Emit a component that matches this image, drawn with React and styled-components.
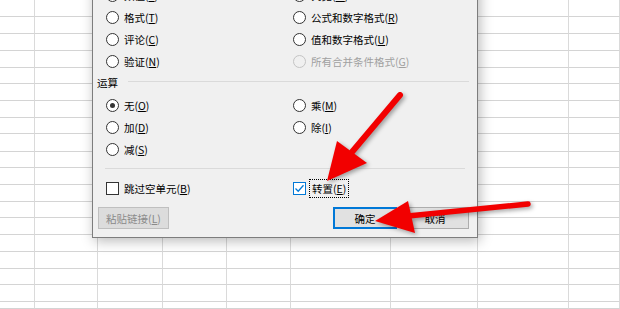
import styled, { createGlobalStyle } from 'styled-components';

// page reset + default font
const GlobalStyle = createGlobalStyle`
    html, body {
        margin: 0;
        padding: 0;
        width: 620px;
        height: 309px;
        overflow: hidden;
        background: #fff;
    }
    body {
        font-family: 'Microsoft YaHei UI', 'Noto Sans CJK SC', 'Noto Sans', sans-serif;
        font-size: 10.5px;
        color: #000;
    }
`;

// spreadsheet geometry (column / row sizes read from the sheet behind the dialog)
const colWidths = [35, 63, 65, 64, 64, 100, 87, 91];
const rowLines = [16, 33, 50, 67, 83, 100, 117, 133, 151, 167, 184, 201, 217, 234, 251, 268, 284, 301];
const rowHeights = rowLines.map((y, i) => (i === 0 ? y + 1 : y - rowLines[i - 1]));

const Page = styled.div`
    position: relative;
    width: 620px;
    height: 309px;
    overflow: hidden;
`;

const Sheet = styled.div`
    display: grid;
    grid-template-columns: ${colWidths.map((w) => w + 'px').join(' ')} 1fr;
    grid-template-rows: ${rowHeights.map((h) => h + 'px').join(' ')} 1fr;
    width: 620px;
    height: 309px;
`;

const Cell = styled.div`
    box-sizing: border-box;
    border-right: 1px solid #dadada;
    border-bottom: 1px solid #d4d4d4;
`;

// the paste special window, sitting over the sheet
const Dialog = styled.div`
    position: absolute;
    left: 92px;
    bottom: 71px;
    width: 386px;
    box-sizing: border-box;
    background: #f0f0f0;
    border: 1px solid #7d7d7d;
    box-shadow: 2px 3px 12px rgba(0, 0, 0, 0.28);
    padding: 10px 8px 8px 0;
    display: flex;
    flex-direction: column;
`;

const OptionGrid = styled.div`
    display: grid;
    grid-template-columns: 187px 1fr;
    grid-auto-rows: 22px;
    padding-left: 13px;
`;

const Option = styled.label`
    display: flex;
    align-items: center;
    gap: 5px;
    white-space: nowrap;
    color: ${(props) => (props.$disabled ? '#a0a0a0' : '#000')};
`;

const Radio = styled.span`
    width: 13px;
    height: 13px;
    box-sizing: border-box;
    border-radius: 50%;
    border: 1px solid ${(props) => (props.$disabled ? '#c4c4c4' : '#333')};
    background: ${(props) => (props.$disabled ? '#f0f0f0' : '#fff')};
    display: flex;
    align-items: center;
    justify-content: center;
    flex: none;
    &::after {
        content: '';
        width: 5px;
        height: 5px;
        border-radius: 50%;
        background: #333;
        display: ${(props) => (props.$checked ? 'block' : 'none')};
    }
`;

const Box = styled.span`
    width: 13px;
    height: 13px;
    box-sizing: border-box;
    border: 1px solid ${(props) => (props.$checked ? '#0078d7' : '#333')};
    background: #fff;
    display: flex;
    align-items: center;
    justify-content: center;
    flex: none;
`;

const Focus = styled.span`
    outline: 1px dotted #000;
    outline-offset: 1px;
    padding: 0 1px;
`;

const GroupHeader = styled.div`
    display: flex;
    align-items: center;
    gap: 10px;
    height: 22px;
    padding-left: 4px;
    span {
        margin-top: -1px;
    }
`;

const Rule = styled.div`
    flex: 1;
    height: 1px;
    margin: -3px 0 0 0;
    background: #dadada;
`;

const Divider = styled.div`
    height: 1px;
    background: #dadada;
    margin: 8px 4px 8px 12px;
`;

const ButtonRow = styled.div`
    display: flex;
    align-items: center;
    gap: 4px;
    margin-top: 8px;
    padding-left: 5px;
`;

const Spacer = styled.div`
    flex: 1;
`;

const Button = styled.button`
    height: 22px;
    width: ${(props) => props.$w}px;
    box-sizing: border-box;
    padding: 0;
    font: inherit;
    background: ${(props) => (props.disabled ? '#dcdcdc' : '#e1e1e1')};
    color: ${(props) => (props.disabled ? '#8a8a8a' : '#000')};
    border: 1px solid ${(props) => (props.$primary ? '#0078d7' : props.disabled ? '#bfbfbf' : '#adadad')};
    box-shadow: ${(props) => (props.$primary ? 'inset 0 0 0 1px #0078d7' : 'none')};
`;

const Arrows = styled.svg`
    position: absolute;
    left: 0;
    top: 0;
    pointer-events: none;
    filter: drop-shadow(2px 2px 2px rgba(0, 0, 0, 0.35));
`;

const pasteRows = [
    ['数值', 'V', '列宽', 'W'],
    ['格式', 'T', '公式和数字格式', 'R'],
    ['评论', 'C', '值和数字格式', 'U'],
    ['验证', 'N', '所有合并条件格式', 'G', true],
];

const opRows = [
    ['无', 'O', '乘', 'M', true],
    ['加', 'D', '除', 'I'],
    ['减', 'S'],
];

function Label({ text, accel }) {
    return (
        <span>
            {text}(<u>{accel}</u>)
        </span>
    );
}

function RadioOption({ text, accel, checked, disabled }) {
    return (
        <Option $disabled={disabled}>
            <Radio $checked={checked} $disabled={disabled} />
            <Label text={text} accel={accel} />
        </Option>
    );
}

function App() {
    return (
        <>
            <GlobalStyle />
            <Page>
                <Sheet>
                    {rowHeights.concat([0]).map((h, r) =>
                        colWidths.concat([0]).map((w, c) => <Cell key={r + '-' + c} />)
                    )}
                </Sheet>

                <Dialog>
                    <OptionGrid>
                        {pasteRows.map((row) => (
                            <>
                                <RadioOption key={row[0]} text={row[0]} accel={row[1]} />
                                <RadioOption key={row[2]} text={row[2]} accel={row[3]} disabled={row[4]} />
                            </>
                        ))}
                    </OptionGrid>

                    <GroupHeader>
                        <span>运算</span>
                        <Rule />
                    </GroupHeader>

                    <OptionGrid>
                        {opRows.map((row) => (
                            <>
                                <RadioOption key={row[0]} text={row[0]} accel={row[1]} checked={row[4]} />
                                {row[2] ? <RadioOption key={row[2]} text={row[2]} accel={row[3]} /> : <div />}
                            </>
                        ))}
                    </OptionGrid>

                    <Divider />

                    <OptionGrid>
                        <Option>
                            <Box />
                            <Label text='跳过空单元' accel='B' />
                        </Option>
                        <Option>
                            <Box $checked>
                                <svg width='11' height='11' viewBox='0 0 11 11'>
                                    <path d='M1.5 5.5 L4.2 8.2 L9.5 2.2' fill='none' stroke='#0078d7' strokeWidth='1.3' />
                                </svg>
                            </Box>
                            <Focus>
                                <Label text='转置' accel='E' />
                            </Focus>
                        </Option>
                    </OptionGrid>

                    <ButtonRow>
                        <Button disabled $w={71}>
                            粘贴链接(<u>L</u>)
                        </Button>
                        <Spacer />
                        <Button $primary $w={64}>
                            确定
                        </Button>
                        <Button $w={68}>取消</Button>
                    </ButtonRow>
                </Dialog>

                {/* red annotation arrows */}
                <Arrows width='620' height='309' viewBox='0 0 620 309'>
                    <line x1='400' y1='95' x2='352' y2='152' stroke='#f20000' strokeWidth='6' strokeLinecap='round' />
                    <polygon points='327,181 337,141 367,163' fill='#f20000' />
                    <line x1='528' y1='204' x2='408' y2='216' stroke='#f20000' strokeWidth='5.5' strokeLinecap='round' />
                    <polygon points='375,221 408,201 415,233' fill='#f20000' />
                </Arrows>
            </Page>
        </>
    );
}

export default App;
